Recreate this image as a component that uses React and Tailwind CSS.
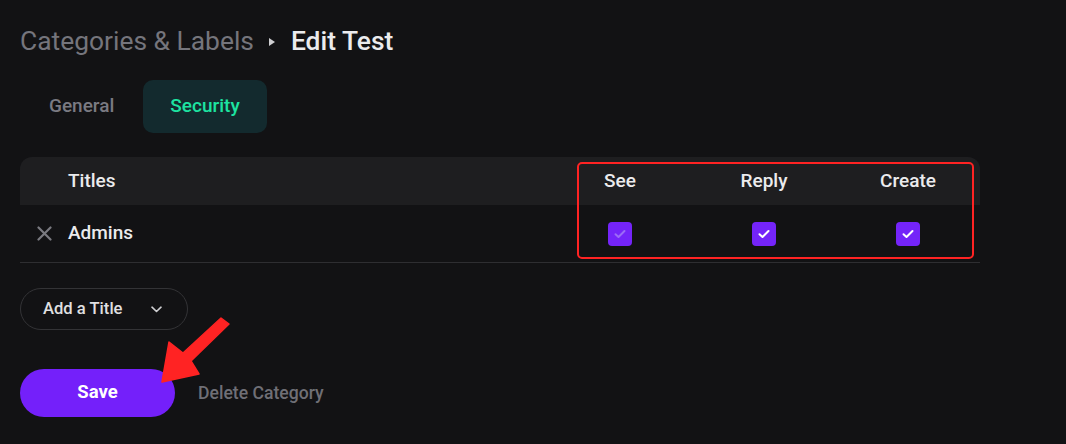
import React, { useState } from "react";

const columns = ["See", "Reply", "Create"];

const Checkbox = ({ dim }) => (
  <div className="w-6 h-6 rounded-[4px] bg-[#7424f9] flex items-center justify-center">
    <svg width="12" height="10" viewBox="0 0 12 10" fill="none">
      <path
        d="M1.5 5.2 4.5 8 10.5 2"
        stroke={dim ? "#9b6cf6" : "#ffffff"}
        strokeWidth="2"
        strokeLinecap="round"
        strokeLinejoin="round"
      />
    </svg>
  </div>
);

const App = () => {
  const [tab, setTab] = useState("Security");

  return (
    <div
      className="relative w-[1066px] h-[444px] bg-[#121214] overflow-hidden"
      style={{ fontFamily: "Roboto, 'Liberation Sans', sans-serif" }}
    >
      <div className="pl-5 pt-[27px]">
        {/* breadcrumb */}
        <div className="flex items-center h-[30px] text-[26.4px]">
          <span className="text-[#75757c]">Categories &amp; Labels</span>
          <span className="ml-[15px] mr-[16px] w-0 h-0 border-y-[4.5px] border-y-transparent border-l-[6px] border-l-[#cfcfd2]" />
          <span className="text-[#ebebed] font-medium">Edit Test</span>
        </div>

        {/* tabs */}
        <div className="flex gap-[2px] mt-[23px] ml-[2px]">
          {["General", "Security"].map((t) => (
            <button
              key={t}
              onClick={() => setTab(t)}
              className={
                "h-[53px] px-[27px] rounded-[10px] text-[19px] font-medium " +
                (tab === t
                  ? "bg-[#132a2e] text-[#1de3a1]"
                  : "text-[#7a7a82]")
              }
            >
              {t}
            </button>
          ))}
        </div>

        {/* table */}
        <div className="w-[960px] mt-[24px]">
          <div className="flex items-center h-[48px] bg-[#1e1e20] rounded-t-[12px] text-[19px] font-medium text-[#ebebed]">
            <div className="flex-1 pl-[48px]">Titles</div>
            {columns.map((c) => (
              <div key={c} className="w-[144px] text-center">
                {c}
              </div>
            ))}
          </div>
          <div className="flex items-center h-[58px] border-b border-[#2e2e31]">
            <div className="flex-1 flex items-center">
              <svg className="ml-[17px] mr-[16px]" width="15" height="15" viewBox="0 0 15 15">
                <path d="M1.5 1.5 13.5 13.5 M13.5 1.5 1.5 13.5" stroke="#7a7a80" strokeWidth="2.2" strokeLinecap="round" />
              </svg>
              <span className="text-[19px] font-medium text-[#ebebed]">Admins</span>
            </div>
            {columns.map((c, i) => (
              <div key={c} className="w-[144px] flex justify-center">
                <Checkbox dim={i === 0} />
              </div>
            ))}
          </div>
        </div>

        {/* add title */}
        <button className="mt-[25px] h-[42px] w-[168px] rounded-full border border-[#333336] flex items-center pl-[22px] text-[16.6px] font-medium text-[#e0e0e2]">
          Add a Title
          <svg className="ml-[28px]" width="11" height="7" viewBox="0 0 11 7" fill="none">
            <path d="M1 1.2 5.5 5.5 10 1.2" stroke="#cfcfd2" strokeWidth="1.6" strokeLinecap="round" strokeLinejoin="round" />
          </svg>
        </button>

        {/* actions */}
        <div className="flex items-center mt-[39px]">
          <button className="w-[155px] h-[48px] rounded-full bg-[#7420fa] text-white text-[18.5px] font-bold">
            Save
          </button>
          <span className="ml-[23px] text-[17.6px] font-medium text-[#6f6f76]">Delete Category</span>
        </div>
      </div>

      {/* annotation box */}
      <div className="absolute left-[577px] top-[162px] w-[397px] h-[97px] border-2 border-[#ff2323] rounded-[5px]" />

      {/* annotation arrow */}
      <svg className="absolute left-0 top-0" width="1066" height="444" viewBox="0 0 1066 444">
        <polygon
          points="162,382 169,342 183,353 221,318 229,324 191,361 199,374"
          fill="#ff2323"
          stroke="#ff2323"
          strokeWidth="1.5"
          strokeLinejoin="round"
        />
      </svg>
    </div>
  );
};

export default App;
